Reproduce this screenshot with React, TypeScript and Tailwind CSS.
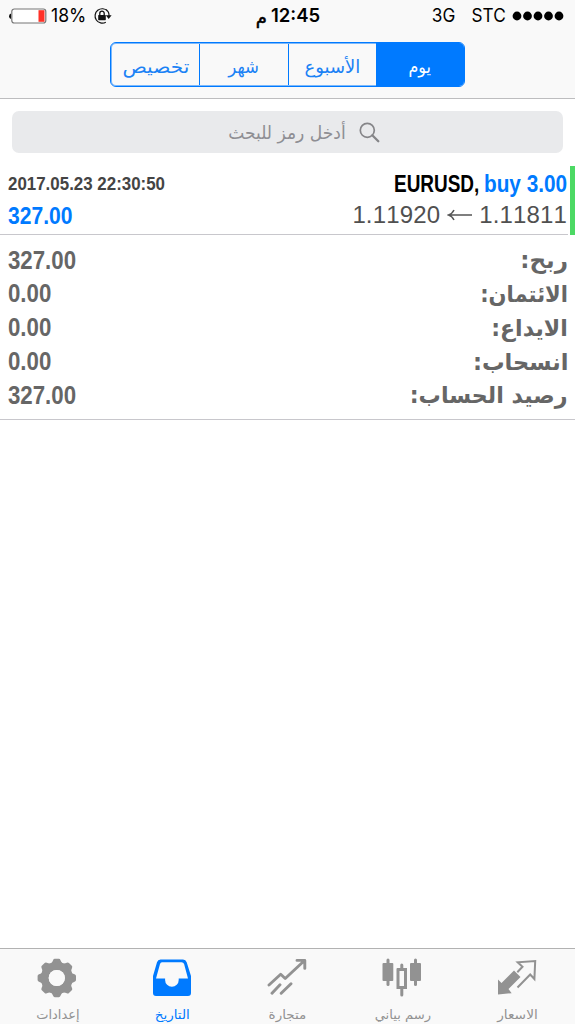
import type { ReactNode } from "react";

const arabic = "font-['DejaVu_Sans',sans-serif]";

function Segment({ label, active = false, divider = true, scale }: { label: string; active?: boolean; divider?: boolean; scale: string }) {
  return (
    <button
      className={`flex flex-1 items-center justify-center pt-1 text-[18px] ${arabic} ${
        active ? "bg-[#007aff] text-white" : "text-[#1b82f5]"
      } ${divider ? "border-r border-[#007aff]" : ""}`}
    >
      <span dir="rtl" className={scale}>{label}</span>
    </button>
  );
}

function SummaryRow({ value, label, scale }: { value: string; label: string; scale: string }) {
  return (
    <div className="flex h-[33.8px] items-center justify-between text-[#666]">
      <span className="origin-left scale-x-[0.89] text-[25px] font-bold">{value}</span>
      <span dir="rtl" className={`origin-right whitespace-nowrap text-[23px] font-bold ${arabic} ${scale}`}>{label}</span>
    </div>
  );
}

function Tab({ label, active = false, scale, children }: { label: string; active?: boolean; scale: string; children: ReactNode }) {
  return (
    <button className={`flex flex-1 flex-col items-center pt-[9px] ${active ? "text-[#007aff]" : "text-[#929292]"}`}>
      <svg className="mr-[2px]" width="40" height="40" viewBox="0 0 40 40" fill="none">{children}</svg>
      <span dir="rtl" className={`mt-[8px] text-[12.5px] leading-[18px] whitespace-nowrap ${arabic} ${scale}`}>{label}</span>
    </button>
  );
}

const teeth = [0, 45, 90, 135, 180, 225, 270, 315];

export default function App() {
  return (
    <div className="flex h-[1024px] w-[575px] flex-col overflow-hidden bg-white font-['Liberation_Sans',sans-serif]">
      <header className="h-[99px] shrink-0 border-b border-[#bdbdbf] bg-[#f9f9f9]">
        <div className="grid h-8 grid-cols-3 items-center pr-[10px] pl-2 font-['Inter',sans-serif] text-[18.5px] text-black">
          <div className="flex items-center">
            <svg width="39" height="18" viewBox="0 0 39 18">
              <path d="M3 6.5Q1 7 1 9.2T3 12Z" fill="#111" />
              <rect x="3.8" y="2" width="34" height="14" rx="2.5" fill="#fff" stroke="#777" strokeWidth="1.2" />
              <rect x="30.5" y="3.2" width="6" height="11.6" fill="#ff3127" />
            </svg>
            <span className="ml-1 w-[36px] origin-left scale-x-[0.95]">18%</span>
            <svg className="ml-[6px]" width="20" height="18" viewBox="0 0 20 18" fill="none" stroke="#111" strokeWidth="1.2">
              <path d="M14.5 4A7.2 7.2 0 1 0 12.8 15.2M13 2.5A7.2 7.2 0 0 1 16 9" />
              <path d="M12.8 8.3h5.8l-2.9 3.7Z" fill="#111" stroke="none" />
              <rect x="5.2" y="8" width="7.6" height="5.2" rx="0.6" fill="#111" stroke="none" />
              <path d="M6.8 8V6.3a2.2 2.2 0 0 1 4.4 0V8" strokeWidth="1.3" />
            </svg>
          </div>
          <div className="flex items-center justify-center gap-1 pl-[3px] font-semibold">
            <span className={`pt-[2px] text-[18px] font-normal [-webkit-text-stroke:0.5px_black] ${arabic}`}>م</span>
            <span>12:45</span>
          </div>
          <div className="flex items-center justify-end">
            <span className="origin-right scale-x-[0.93] whitespace-pre">3G</span>
            <span className="ml-[14px] origin-right scale-x-[0.93]">STC</span>
            <svg className="ml-[6px]" width="53" height="10" viewBox="0 0 53 10">
              {[5, 15.5, 26, 36.5, 47].map((x) => <circle key={x} cx={x} cy="5" r="4.4" />)}
            </svg>
          </div>
        </div>
        <div className="mx-auto mt-[10px] flex h-[45px] w-[355px] overflow-hidden rounded-[6px] border border-[#007aff] bg-[#f9f9f9] p-px shadow-[inset_0_0_0_1px_#7db9fb]">
          <Segment label="تخصيص" scale="scale-x-[1.12]" />
          <Segment label="شهر" scale="scale-x-[0.92]" />
          <Segment label="الأسبوع" divider={false} scale="" />
          <div className="-my-px -mr-px flex w-[88px] bg-[#007aff]">
            <Segment label="يوم" active divider={false} scale="scale-x-[0.88]" />
          </div>
        </div>
      </header>

      <div className="px-3 pt-3">
        <div className="flex h-[42px] items-center rounded-[7px] bg-[#e9eaec] pr-[183px] pl-[180px] text-[#8e8e93]">
          <div className="flex w-full items-center justify-end gap-[13px]">
            <span dir="rtl" className={`origin-right scale-x-[0.95] text-[18px] whitespace-nowrap ${arabic}`}>أدخل رمز للبحث</span>
            <svg className="shrink-0" width="21" height="21" viewBox="0 0 21 21" fill="none" stroke="#858588" strokeWidth="1.7">
              <circle cx="8.3" cy="8.3" r="7" />
              <path d="m13.3 13.3 6 6" strokeWidth="2.3" strokeLinecap="round" />
            </svg>
          </div>
        </div>
      </div>

      <section className="mt-[13px] flex h-[69px] shrink-0">
        <div className="flex-1 border-b border-[#c8c7cc] pr-px pl-2">
          <div className="flex h-[34px] items-center justify-between font-bold">
            <span className="mt-[2px] origin-left scale-x-[0.89] text-[19px] whitespace-nowrap text-[#444]">2017.05.23 22:30:50</span>
            <div className="mt-px flex items-center text-[24px]">
              <span className="w-[90px] origin-left scale-x-[0.79] text-black">EURUSD,</span>
              <span className="w-[83px] origin-left scale-x-[0.865] whitespace-nowrap text-[#007aff]">buy 3.00</span>
            </div>
          </div>
          <div className="flex h-[32px] items-center justify-between">
            <span className="origin-left scale-x-[0.86] text-[24.5px] font-bold text-[#007aff]">327.00</span>
            <div className="mb-[2px] flex items-center text-[24px] tracking-[0.15px] text-[#505050] [font-kerning:none]">
              <span>1.11920</span>
              <svg className="mx-[7px]" width="25" height="14" viewBox="0 0 25 14" fill="none" stroke="#555" strokeWidth="1.5">
                <path d="M1.5 7H25M7 2Q5 6 1.5 7Q5 8 7 12" />
              </svg>
              <span>1.11811</span>
            </div>
          </div>
        </div>
        <div className="ml-[2px] w-[5px] bg-[#4cd964]" />
      </section>

      <section className="h-[185px] shrink-0 border-b border-[#c8c7cc] pt-[8.5px] pr-[7px] pl-2">
        <SummaryRow value="327.00" label="ربح:" scale="" />
        <SummaryRow value="0.00" label="الائتمان:" scale="scale-x-[0.915]" />
        <SummaryRow value="0.00" label="الايداع:" scale="scale-x-[0.96]" />
        <SummaryRow value="0.00" label="انسحاب:" scale="scale-x-[0.98]" />
        <SummaryRow value="327.00" label="رصيد الحساب:" scale="scale-x-[0.965]" />
      </section>

      <nav className="mt-auto flex h-[76px] shrink-0 border-t border-[#b2b2b2] bg-[#f9f9f9]">
        <Tab label="إعدادات" scale="scale-x-[1.04]">
          <g fill="currentColor">
            {teeth.map((a) => <path key={a} d="M13.2 6Q15.5 4.5 16.1 2.2Q16.5 .8 17.8 .8h4q1.3 0 1.7 1.4Q24.1 4.5 26.4 6v4H13.2Z" transform={`rotate(${a} 19.8 20)`} />)}
          </g>
          <circle cx="19.8" cy="20" r="12" stroke="currentColor" strokeWidth="7.8" />
          <circle cx="19.8" cy="20" r="8.1" fill="#f9f9f9" />
        </Tab>
        <Tab label="التاريخ" active scale="scale-x-[1.08]">
          <path d="M8.5 1.5h22.5q2.8 0 3.7 2.7L39 18v17q0 3-3 3H4q-3 0-3-3V18L5 4.2q.8-2.7 3.5-2.7Z" fill="currentColor" />
          <path d="M10 4.2h19.5q2 0 2.6 1.9L36 20.5H26.7V22a6.8 6.8 0 0 1-13.6 0V20.5H4L8 6.1Q8.5 4.2 10 4.2Z" fill="#f9f9f9" />
        </Tab>
        <Tab label="متجارة" scale="scale-x-[1.08]">
          <g stroke="currentColor" strokeWidth="2.9" strokeLinecap="round" strokeLinejoin="round">
            <path d="M2 27 13.7 16.3l4.5 4.2L37 3M30 2.4h7.8v8M5 35.3l8-8.5M14.2 35.3l9.8-9.6" />
          </g>
        </Tab>
        <Tab label="رسم بياني" scale="scale-x-[1.05]">
          <g fill="currentColor">
            <rect x=".5" y="5" width="10.8" height="18" rx="1" />
            <rect x="28" y="5" width="11" height="18" rx="1" />
            <rect x="4.5" y=".5" width="3" height="27.5" rx="1.5" />
            <rect x="32" y=".5" width="3" height="27.5" rx="1.5" />
            <path d="M15.5 10h2.8V7a1.5 1.5 0 0 1 3 0v3H25v21h-3.7v6a1.5 1.5 0 0 1-3 0v-6h-3.8V11q0-1 1-1Zm2 3v15H22V13Z" fillRule="evenodd" />
          </g>
        </Tab>
        <Tab label="الاسعار" scale="scale-x-[1.1]">
          <path d="m1 21.5 3.5 3.5L17 12.5l6.5 6.5-12 12 3.2 4.2L1 36.5Z" fill="currentColor" />
          <path d="m20.3 14.3 5.2-5.6-4.8-4.4L38.2 3l-.8 18-4.2-4.5L20.5 29.5" stroke="currentColor" strokeWidth="2" />
        </Tab>
      </nav>
    </div>
  );
}
